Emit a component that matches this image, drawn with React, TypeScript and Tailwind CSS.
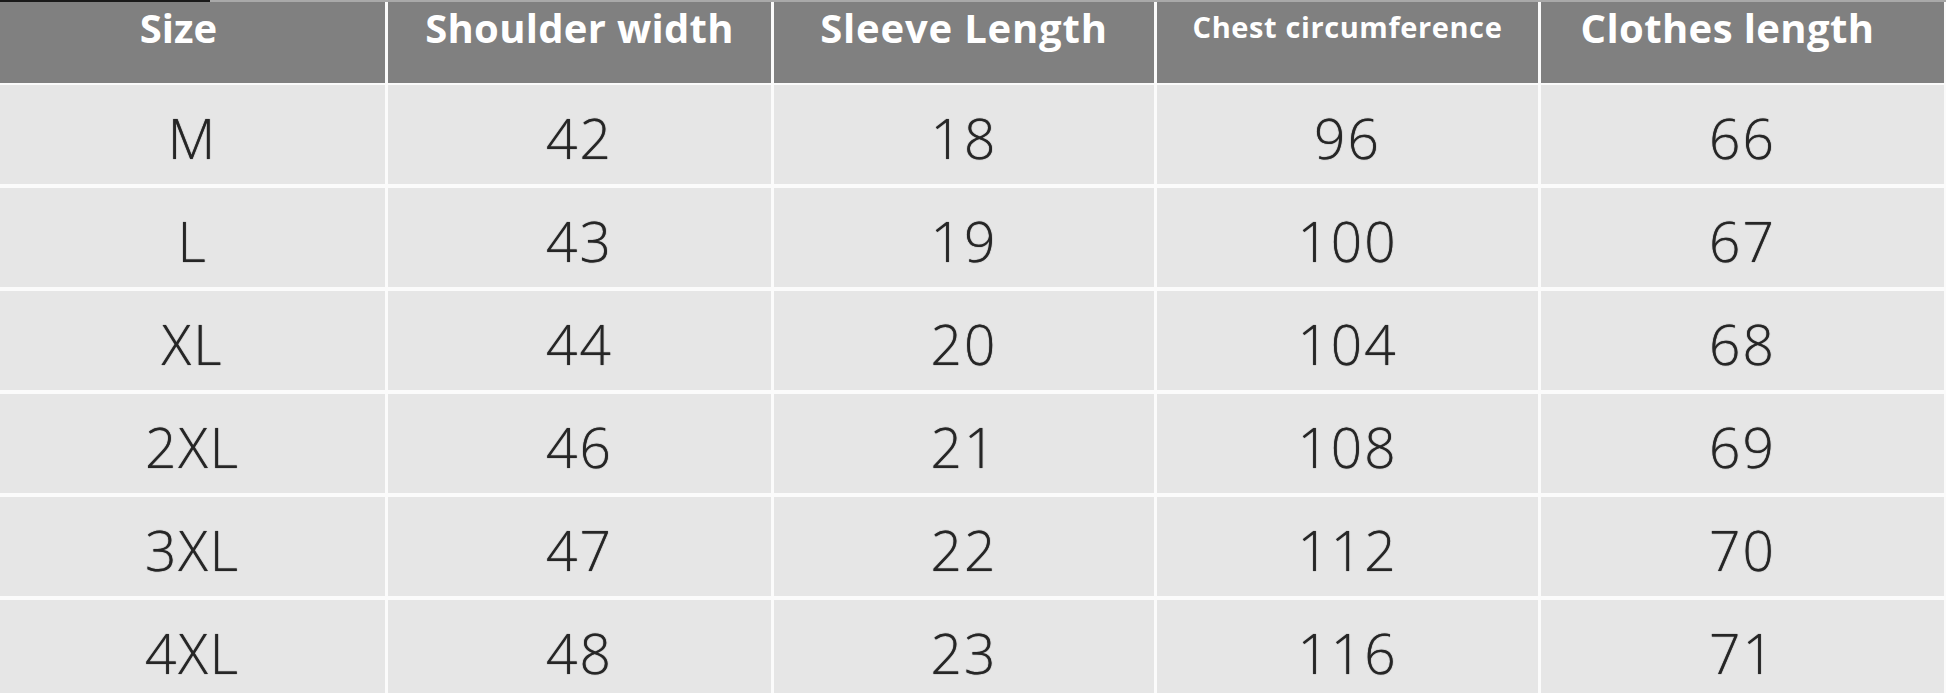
const headers = [
  { label: 'Size', className: 'text-[40px] pr-[28px]' },
  { label: 'Shoulder width', className: 'text-[40px] tracking-[0.3px]' },
  { label: 'Sleeve Length', className: 'text-[40px] tracking-[0.8px]' },
  { label: 'Chest circumference', className: 'text-[29px] tracking-[0.6px] pt-[10px]' },
  { label: 'Clothes length', className: 'text-[40px] tracking-[0.4px] pr-[30px]' },
];

const rows = [
  ['M', '42', '18', '96', '66'],
  ['L', '43', '19', '100', '67'],
  ['XL', '44', '20', '104', '68'],
  ['2XL', '46', '21', '108', '69'],
  ['3XL', '47', '22', '112', '70'],
  ['4XL', '48', '23', '116', '71'],
];

export default function App() {
  return (
    <div className="w-[1946px] h-[693px] overflow-hidden bg-[#fbfbfb] font-['Open_Sans',sans-serif]">
      <div className="flex h-[2px]">
        <div className="w-[210px] bg-[#1a1a1a]" />
        <div className="flex-1 bg-[#a9a9a9]" />
      </div>
      <div className="grid grid-cols-[385px_383px_380px_381px_403px] gap-x-[3px] gap-y-[4px]">
        {headers.map((h) => (
          <div
            key={h.label}
            className={`h-[81px] mb-[-2px] bg-[#808080] text-white font-bold leading-none flex justify-center pt-[6px] ${h.className}`}
          >
            <span>{h.label}</span>
          </div>
        ))}
        {rows.map((row, i) =>
          row.map((cell, j) => (
            <div
              key={`${i}-${j}`}
              className="h-[99px] bg-[#e6e6e6] text-[#262626] text-[55px] font-light tracking-[2px] leading-none flex items-center justify-center pt-[6px] [text-shadow:0_0_1px_#2a2a2a]"
            >
              {cell}
            </div>
          ))
        )}
      </div>
    </div>
  );
}
